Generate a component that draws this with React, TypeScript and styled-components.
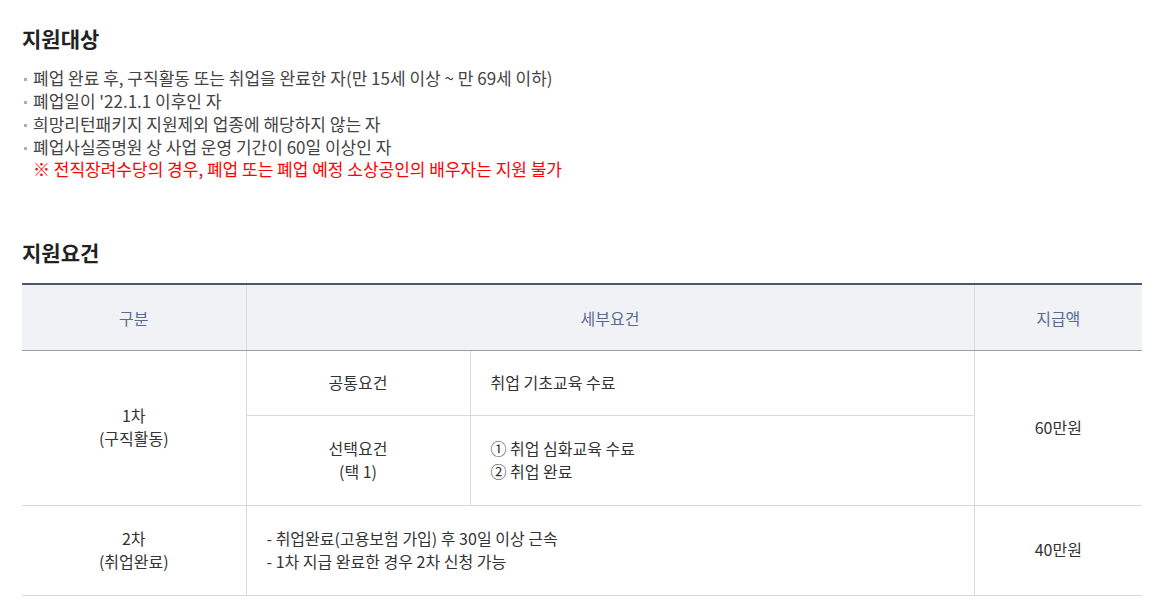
import styled, { createGlobalStyle } from "styled-components";

const GlobalStyle = createGlobalStyle`
  html, body {
    margin: 0;
    padding: 0;
    background: #fff;
  }
  body {
    font-family: "Noto Sans CJK KR", "Noto Sans", sans-serif;
    color: #333;
  }
`;

interface Row {
  step: string;
  stepSub: string;
  amount: string;
}

const targets = [
  "폐업 완료 후, 구직활동 또는 취업을 완료한 자(만 15세 이상 ~ 만 69세 이하)",
  "폐업일이 '22.1.1 이후인 자",
  "희망리턴패키지 지원제외 업종에 해당하지 않는 자",
  "폐업사실증명원 상 사업 운영 기간이 60일 이상인 자",
];

const first: Row = { step: "1차", stepSub: "(구직활동)", amount: "60만원" };
const second: Row = { step: "2차", stepSub: "(취업완료)", amount: "40만원" };

function App() {
  return (
    <StyledPage>
      <GlobalStyle />
      <Section>
        <Title>지원대상</Title>
        <BulletList>
          {targets.map((t) => (
            <li key={t}>{t}</li>
          ))}
        </BulletList>
        <Notice>※ 전직장려수당의 경우, 폐업 또는 폐업 예정 소상공인의 배우자는 지원 불가</Notice>
      </Section>

      <Section $gap={58}>
        <Title>지원요건</Title>
        <Table>
          <colgroup>
            <col style={{ width: 224 }} />
            <col style={{ width: 224 }} />
            <col style={{ width: 504 }} />
            <col style={{ width: 168 }} />
          </colgroup>
          <thead>
            <tr>
              <Th>구분</Th>
              <Th colSpan={2}>세부요건</Th>
              <Th>지급액</Th>
            </tr>
          </thead>
          <tbody>
            <tr>
              <Td rowSpan={2} $first>
                {first.step}
                <br />
                {first.stepSub}
              </Td>
              <Td $height={65}>공통요건</Td>
              <Td $align="left">취업 기초교육 수료</Td>
              <Td rowSpan={2} $last>
                {first.amount}
              </Td>
            </tr>
            <tr>
              <Td $height={90}>
                선택요건
                <br />
                (택 1)
              </Td>
              <Td $align="left">
                ① 취업 심화교육 수료
                <br />② 취업 완료
              </Td>
            </tr>
            <tr>
              <Td $height={90} $first>
                {second.step}
                <br />
                {second.stepSub}
              </Td>
              <Td colSpan={2} $align="left">
                - 취업완료(고용보험 가입) 후 30일 이상 근속
                <br />- 1차 지급 완료한 경우 2차 신청 가능
              </Td>
              <Td $last>{second.amount}</Td>
            </tr>
          </tbody>
        </Table>
      </Section>
    </StyledPage>
  );
}

export default App;

const StyledPage = styled.div`
  padding: 23px 14px 10px 22px;
  width: 1120px;
`;

const Section = styled.section<{ $gap?: number }>`
  margin-top: ${(p) => p.$gap ?? 0}px;
`;

const Title = styled.h3`
  margin: 0;
  font-size: 21px;
  line-height: 30px;
  font-weight: 700;
  color: #222;
`;

const BulletList = styled.ul`
  list-style: none;
  margin: 13px 0 0;
  padding: 0;

  li {
    position: relative;
    padding-left: 11px;
    font-size: 17px;
    line-height: 23px;
    color: #444;
  }

  li::before {
    content: "";
    position: absolute;
    left: 2px;
    top: 12px;
    width: 3px;
    height: 3px;
    background: #a9aebb;
  }
`;

const Notice = styled.p`
  margin: 0;
  padding-left: 11px;
  font-size: 17px;
  line-height: 21px;
  font-weight: 400;
  color: #f00;
`;

const Table = styled.table`
  margin-top: 16px;
  width: 1120px;
  border-collapse: collapse;
  table-layout: fixed;
  border-top: 2px solid #4b5570;
`;

const Th = styled.th`
  height: 65px;
  padding: 0;
  background: #f0f2f6;
  font-size: 16px;
  font-weight: 400;
  color: #5b6c94;
  text-align: center;
  border-bottom: 1px solid #9a9ea6;
  border-left: 1px solid #dadada;

  &:first-child {
    border-left: none;
  }
`;

const Td = styled.td<{ $height?: number; $align?: "left" | "center"; $first?: boolean; $last?: boolean }>`
  height: ${(p) => (p.$height ? `${p.$height - 3}px` : "auto")};
  padding: 0 20px 2px;
  font-size: 16px;
  line-height: 23px;
  color: #333;
  text-align: ${(p) => p.$align ?? "center"};
  border: 1px solid #dadada;
  border-left: ${(p) => (p.$first ? "none" : "1px solid #dadada")};
  border-right: ${(p) => (p.$last ? "none" : "1px solid #dadada")};
`;
